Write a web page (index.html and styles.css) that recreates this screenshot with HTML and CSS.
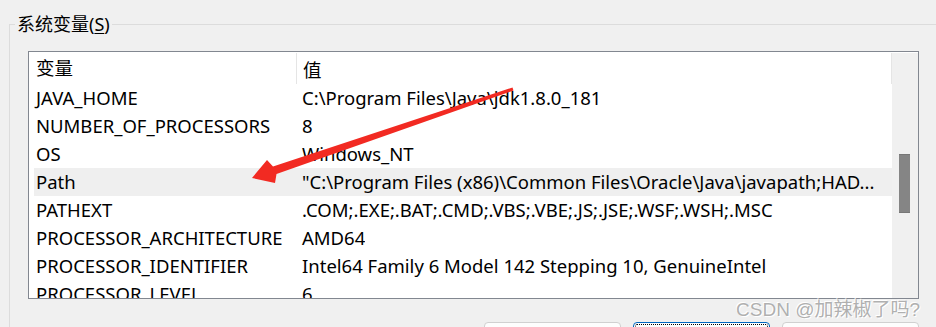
FILE: index.html
```html
<!DOCTYPE html>
<html lang="zh-CN">
<head>
  <meta charset="UTF-8"/>
  <title>系统变量</title>
  <link rel="stylesheet" href="styles.css">
</head>
<body>
  <fieldset class="group">
    <legend>系统变量(<u>S</u>)</legend>

    <div class="listbox">
      <div class="list">
        <div class="row head">
          <div class="name">变量</div>
          <div class="value">值</div>
        </div>
        <div class="row"><div class="name">JAVA_HOME</div><div class="value">C:\Program Files\Java\jdk1.8.0_181</div></div>
        <div class="row"><div class="name">NUMBER_OF_PROCESSORS</div><div class="value">8</div></div>
        <div class="row"><div class="name">OS</div><div class="value">Windows_NT</div></div>
        <div class="row selected"><div class="name">Path</div><div class="value">"C:\Program Files (x86)\Common Files\Oracle\Java\javapath;HAD...</div></div>
        <div class="row"><div class="name">PATHEXT</div><div class="value">.COM;.EXE;.BAT;.CMD;.VBS;.VBE;.JS;.JSE;.WSF;.WSH;.MSC</div></div>
        <div class="row"><div class="name">PROCESSOR_ARCHITECTURE</div><div class="value">AMD64</div></div>
        <div class="row"><div class="name">PROCESSOR_IDENTIFIER</div><div class="value">Intel64 Family 6 Model 142 Stepping 10, GenuineIntel</div></div>
        <div class="row"><div class="name">PROCESSOR_LEVEL</div><div class="value">6</div></div>
      </div>
      <div class="scrollbar"><div class="thumb"></div></div>
    </div>

    <div class="buttons">
      <button>新建(W)...</button>
      <button class="focused">编辑(I)...</button>
      <button>删除(L)</button>
    </div>
  </fieldset>

  <div class="watermark">CSDN @加辣椒了吗?</div>

  <svg class="arrow" width="936" height="327" viewBox="0 0 936 327">
    <polygon fill="#f22a22" points="252,178 267,160 273,166.5 512.5,87.5 513.5,90.5 276.5,174 275,183"/>
  </svg>
</body>
</html>
```

FILE: styles.css
```css
body { margin:0; background:#f0f0f0; color:#000; font-family:"Noto Sans","Noto Sans CJK SC",sans-serif; overflow:hidden; height:327px; position:relative; }

.group { margin:14px 0 0 9px; padding:0; border:none; border-top:1px solid #dcdcdc; border-left:1px solid #dcdcdc; min-height:400px; }
.group legend { font-size:18px; line-height:20px; padding:0 2px; margin-left:5px; color:#000; }
.group legend u { text-decoration-thickness:1px; text-underline-offset:2px; }

.listbox { display:flex; margin:17px 0 0 18px; width:891px; height:248px; box-sizing:border-box; border:1px solid #828790; background:#fff; }
.list { flex:1; overflow:hidden; padding-top:1px; }
.row { display:flex; height:28px; box-sizing:border-box; padding-bottom:2px; align-items:center; margin-left:5px; font-size:18.5px; white-space:nowrap; }
.row .name { width:260px; padding-left:2px; flex-shrink:0; }
.row .value { padding-left:6px; overflow:hidden; }
.row.head { height:31px; padding-bottom:0; border-right:1px solid #e5e5e5; }
.row.head .name { height:31px; line-height:30px; border-right:1px solid #e5e5e5; }
.row.selected { background:#efefef; }

.scrollbar { width:26px; margin-top:1px; background:#f0f0f0; flex-shrink:0; }
.thumb { width:11px; height:59px; margin:101px 0 0 7px; background:#858585; border-top:1px solid #777; border-bottom:1px solid #777; box-sizing:border-box; }

.buttons { display:flex; justify-content:flex-end; gap:12px; width:891px; margin:23px 0 0 18px; }
.buttons button { width:137px; height:44px; background:#fdfdfd; border:1px solid #d0d0d0; border-radius:4px; font-family:inherit; font-size:16px; }
.buttons button.focused { border-color:#0067c0; outline:1px dotted #000; outline-offset:-3px; }

.watermark { position:absolute; right:16px; top:299px; font-size:19px; line-height:22px; color:#b0b0b0; text-shadow:1px 1px 0 #fff, -1px -1px 0 #fff; font-family:"Liberation Sans","Noto Sans CJK SC",sans-serif; }

.arrow { position:absolute; left:0; top:0; pointer-events:none; }
```
